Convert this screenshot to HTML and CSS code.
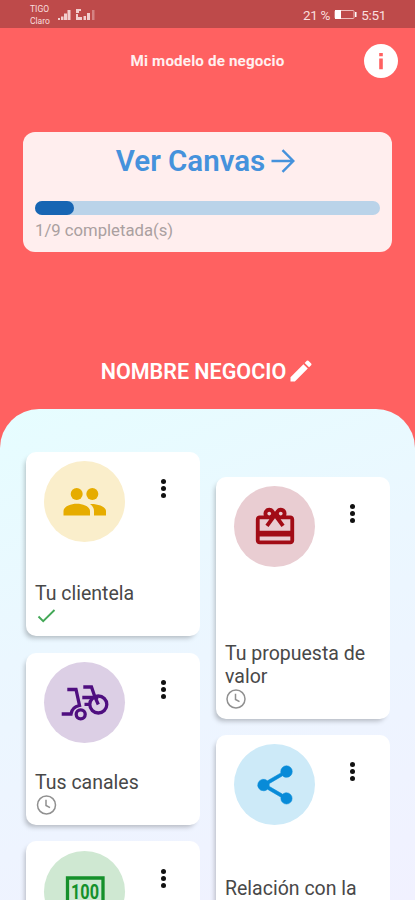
FILE: index.html
```html
<!DOCTYPE html>
<html lang="es">
<head>
    <meta charset="UTF-8">
    <meta name="viewport" content="width=device-width, initial-scale=1">
    <title>Mi modelo de negocio</title>
    <link rel="stylesheet" href="styles.css">
</head>
<body>
    <div class="app">
        <div class="status-bar">
            <div class="carriers">
                <span>TIGO</span>
                <span>Claro</span>
            </div>
            <svg class="signal" width="42" height="14" viewBox="0 0 42 14">
                <path d="M1 12v-2h2v2zM4 12V8.500h2.500V12zM7 12V5.500h3V12zM10.500 12V2h3v10z" fill="#f2cfcf"/>
                <path d="M19 1h5v2h-2v2h-3zM19 6h2v3h4v3h-6zM26.500 12V8H29v4zM30 12V5h3v7z" fill="#f2cfcf"/>
                <path d="M35 12V2h2.500v10z" fill="#d58383"/>
            </svg>
            <div class="status-right">
                <span class="percent">21 %</span>
                <svg width="23" height="12" viewBox="0 0 23 12">
                    <rect x="1" y="1.500" width="19" height="8" rx="1" fill="none" stroke="#eebcbc"/>
                    <path d="M1 1h6v9H1zM21 3h1.500v5H21z" fill="#fff"/>
                </svg>
                <span class="time">5:51</span>
            </div>
        </div>

        <div class="header">
            <h1>Mi modelo de negocio</h1>
            <button class="info-button" aria-label="Información">
                <svg width="34" height="34" viewBox="0 0 34 34">
                    <path d="M15.200 9h3.600v3.200h-3.600zM15.200 14.500h3.600v10.700h-3.600z" fill="#ff6161"/>
                </svg>
            </button>
        </div>

        <div class="canvas-card">
            <a class="canvas-link">
                <span>Ver Canvas</span>
                <svg width="24" height="24" viewBox="0 0 24 24" fill="none" stroke="#4592dc" stroke-width="2.400">
                    <path d="M0.500 12H22M11.500 1.200 22.300 12 11.500 22.800"/>
                </svg>
            </a>
            <div class="progress"><div class="progress-fill"></div></div>
            <div class="progress-text">1/9 completada(s)</div>
        </div>

        <div class="business">
            <h2>NOMBRE NEGOCIO</h2>
            <svg width="28" height="28" viewBox="0 0 24 24" fill="#fff">
                <path d="M3 17.250V21h3.750L17.810 9.940l-3.750-3.750L3 17.250zM20.710 7.040a1 1 0 0 0 0-1.410l-2.340-2.340a1 1 0 0 0-1.410 0l-1.830 1.830 3.750 3.750 1.830-1.830z"/>
            </svg>
        </div>

        <div class="sheet">
            <div class="column">
                <div class="card card-clients">
                    <div class="card-top">
                        <div class="circle yellow">
                            <svg width="50" height="32" viewBox="0 0 50 32" fill="#e6ac00">
                                <circle cx="16.700" cy="8" r="6"/>
                                <circle cx="32.300" cy="8" r="6"/>
                                <path d="M3.500 29.500V25c0-4.500 7-7.300 13.300-7.300S30 20.500 30 25v4.500z"/>
                                <path d="M34 29.500V25c0-3-1.500-5.200-4-7 6.500-.5 16 2.200 16 7v4.500z"/>
                            </svg>
                        </div>
                        <span class="dots"><i></i><i></i><i></i></span>
                    </div>
                    <div class="card-bottom">
                        <p>Tu clientela</p>
                        <svg class="state" width="22" height="22" viewBox="0 0 22 22" fill="none" stroke="#43a857" stroke-width="1.900">
                            <path d="M3.500 11.500 8.200 16.200 19.500 5"/>
                        </svg>
                    </div>
                </div>

                <div class="card card-channels">
                    <div class="card-top">
                        <div class="circle purple">
                            <svg width="50" height="42" viewBox="0 0 50 42" fill="none" stroke="#4f0f80" stroke-width="3.300">
                                <path d="M7.300 7.500h8.700l3.500 16C14.500 24.500 11.500 28 11 32H1.700"/>
                                <path d="M23.300 5h8.200l3.500 10.200 3.300 7.300M22.300 15.500h16M24.500 22.300h6"/>
                                <circle cx="38.300" cy="22.500" r="8.500"/>
                                <circle cx="20.700" cy="32.300" r="4.500"/>
                            </svg>
                        </div>
                        <span class="dots"><i></i><i></i><i></i></span>
                    </div>
                    <div class="card-bottom">
                        <p>Tus canales</p>
                        <svg class="state" width="22" height="22" viewBox="0 0 22 22" fill="none" stroke="#909090" stroke-width="1.500">
                            <circle cx="11.500" cy="11" r="9"/>
                            <path d="M11 5.800V11.500l4 2.200"/>
                        </svg>
                    </div>
                </div>

                <div class="card card-income">
                    <div class="card-top">
                        <div class="circle green">
                            <svg width="40" height="36" viewBox="0 0 40 36">
                                <path d="M2.500 4h35.500v28H2.500z" fill="none" stroke="#15902b" stroke-width="3.300"/>
                                <text class="bill" x="20" y="25" textLength="28" lengthAdjust="spacingAndGlyphs">100</text>
                            </svg>
                        </div>
                        <span class="dots"><i></i><i></i><i></i></span>
                    </div>
                </div>
            </div>

            <div class="column column-right">
                <div class="card card-value">
                    <div class="card-top">
                        <div class="circle red">
                            <svg width="46" height="46" viewBox="0 0 24 24" fill="#a20c16">
                                <path d="M20 6h-2.180c.110-.310.180-.650.180-1a2.996 2.996 0 0 0-5.500-1.650l-.500.670-.500-.680C10.960 2.540 10.050 2 9 2 7.340 2 6 3.340 6 5c0 .350.070.690.180 1H4c-1.110 0-1.990.890-1.990 2L2 19c0 1.110.890 2 2 2h16c1.110 0 2-.890 2-2V8c0-1.110-.890-2-2-2zm-5-2c.550 0 1 .450 1 1s-.450 1-1 1-1-.450-1-1 .450-1 1-1zM9 4c.550 0 1 .450 1 1s-.450 1-1 1-1-.450-1-1 .450-1 1-1zm11 15H4v-2h16v2zm0-5H4V8h5.080L7 10.830 8.620 12 11 8.760l1-1.360 1 1.360L15.380 12 17 10.830 14.920 8H20v6z"/>
                            </svg>
                        </div>
                        <span class="dots"><i></i><i></i><i></i></span>
                    </div>
                    <div class="card-bottom">
                        <p>Tu propuesta de valor</p>
                        <svg class="state" width="22" height="22" viewBox="0 0 22 22" fill="none" stroke="#909090" stroke-width="1.500">
                            <circle cx="11" cy="11" r="9"/>
                            <path d="M10.500 5.800V11.500l4 2.200"/>
                        </svg>
                    </div>
                </div>

                <div class="card card-relation">
                    <div class="card-top">
                        <div class="circle blue">
                            <svg width="46" height="46" viewBox="0 0 24 24" fill="#088bd8" stroke="#088bd8" stroke-width="0.300">
                                <path d="M18 16.080c-.760 0-1.440.300-1.960.770L8.910 12.700c.050-.230.090-.460.090-.700s-.040-.470-.090-.700l7.050-4.110c.540.500 1.250.810 2.040.810a3 3 0 1 0-3-3c0 .240.040.470.090.700L8.040 9.810A3 3 0 1 0 6 15c.790 0 1.500-.310 2.040-.810l7.120 4.160c-.050.210-.080.430-.080.650A2.920 2.920 0 1 0 18 16.080z"/>
                            </svg>
                        </div>
                        <span class="dots"><i></i><i></i><i></i></span>
                    </div>
                    <div class="card-bottom">
                        <p>Relación con la</p>
                    </div>
                </div>
            </div>
        </div>
    </div>
</body>
</html>
```

FILE: styles.css
```css
* {
    box-sizing: border-box;
}

body {
    margin: 0;
    font-family: Roboto, "Liberation Sans", sans-serif;
    overflow: hidden;
}

h1, h2, p {
    margin: 0;
}

svg {
    display: block;
    flex-shrink: 0;
}

.app {
    display: flex;
    flex-direction: column;
    height: 900px;
    background-color: #ff6161;
    overflow: hidden;
}

/* phone status bar */
.status-bar {
    display: flex;
    align-items: center;
    flex-shrink: 0;
    height: 28px;
    padding: 1px 29px 0 30px;
    background-color: #be4a4a;
    color: #f9dede;
}

.carriers {
    display: flex;
    flex-direction: column;
    width: 27px;
    font-size: 8.5px;
    line-height: 12px;
}

.status-right {
    display: flex;
    align-items: center;
    gap: 4px;
    margin-left: auto;
    font-size: 13.5px;
}

.percent,
.time {
    letter-spacing: -0.3px;
}

.header {
    display: flex;
    align-items: center;
    flex-shrink: 0;
    height: 66px;
    padding: 0 17px 0 51px;
}

.header h1 {
    flex-grow: 1;
    text-align: center;
    color: #fff0f0;
    font-size: 15.2px;
    font-weight: 700;
    letter-spacing: 0.15px;
}

.info-button {
    width: 34px;
    height: 34px;
    padding: 0;
    border: none;
    border-radius: 50%;
    background-color: white;
}

.canvas-card {
    flex-shrink: 0;
    height: 120px;
    margin: 38px 23px 0;
    padding: 12px 12px 0;
    border-radius: 12px;
    background-color: #ffeeee;
}

.canvas-link {
    display: flex;
    align-items: center;
    justify-content: center;
    gap: 6px;
    height: 34px;
    padding-right: 4px;
    color: #4592dc;
    font-size: 29.5px;
    font-weight: 600;
}

.progress {
    height: 14px;
    margin-top: 23px;
    border-radius: 7px;
    background-color: #bad3e9;
}

.progress-fill {
    width: 11.2%;
    height: 14px;
    border-radius: 7px;
    background-color: #1765b3;
}

.progress-text {
    margin-top: 6px;
    color: #aaa0a0;
    font-size: 16.7px;
    line-height: 20px;
}

.business {
    display: flex;
    align-items: center;
    justify-content: center;
    flex-shrink: 0;
    height: 40px;
    margin-top: 99px;
    padding-left: 1px;
    gap: 1px;
    color: white;
}

.business h2 {
    font-size: 21.5px;
    font-weight: 600;
}

/* rounded sheet with the cards */
.sheet {
    display: flex;
    align-items: flex-start;
    gap: 16px;
    flex-grow: 1;
    min-height: 0;
    margin-top: 18px;
    padding: 43px 25px 0 26px;
    border-radius: 39px 39px 0 0;
    background: linear-gradient(160deg, #e6fdff 0%, #ebf7ff 40%, #f1f1ff 100%);
    overflow: hidden;
}

.column {
    display: flex;
    flex-direction: column;
    flex: 1;
    gap: 16px;
}

.column-right {
    padding-top: 25px;
}

.card {
    display: flex;
    flex-direction: column;
    justify-content: space-between;
    flex-shrink: 0;
    padding: 9px 10px 9px 9px;
    border-radius: 10px;
    background-color: white;
    box-shadow: -3px 4px 5px -2px rgba(0, 0, 0, 0.25);
}

.card-clients {
    height: 184px;
    margin-bottom: 1px;
}

.card-channels {
    height: 172px;
}

.card-value {
    height: 242px;
}

.card-income {
    height: 196px;
    padding-top: 10px;
}

.card-relation {
    height: 219px;
}

/* two label lines and the state icon are reserved */
.card-relation .card-bottom {
    height: 68px;
}

.card-top {
    display: flex;
    align-items: flex-start;
    padding-left: 9px;
}

.circle {
    display: flex;
    align-items: center;
    justify-content: center;
    width: 81px;
    height: 81px;
    border-radius: 50%;
}

.yellow { background-color: #faeecb; }
.purple { background-color: #dccfe5; }
.green { background-color: #cfe8d2; }
.red { background-color: #e9cdd2; }
.blue { background-color: #cdeaf8; }

.bill {
    fill: #15902b;
    font-size: 20px;
    font-weight: 700;
    text-anchor: middle;
}

.dots {
    display: flex;
    flex-direction: column;
    gap: 2px;
    margin: 18px 0 0 36px;
}

.column-right .dots {
    margin-left: 35px;
}

.dots i {
    width: 5px;
    height: 5px;
    border-radius: 50%;
    background-color: #111;
}

.card-bottom p {
    color: #484848;
    font-size: 19.5px;
    line-height: 23px;
}
```
